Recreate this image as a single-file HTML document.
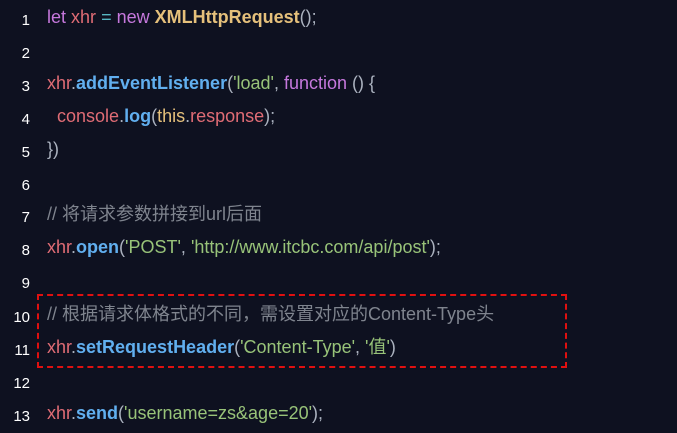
<!DOCTYPE html>
<html><head><style>
body{margin:0;width:677px;height:433px;background:#0e1120;overflow:hidden;font-family:"Liberation Sans","Noto Sans CJK SC",sans-serif;font-size:18px;}
.l{position:absolute;left:0;height:33px;line-height:33px;white-space:pre;color:#abb2bf}
.n{display:inline-block;width:30px;text-align:right;color:#fff;font-size:15px;margin-right:17px;position:relative;top:2px}
.z{font-size:18px}
.k{color:#c678dd}.v{color:#e06c75}.c{color:#e5c07b;font-weight:bold}.f{color:#61afef;font-weight:bold}.s{color:#98c379}.o{color:#56b6c2}.y{color:#e5c07b}.m{color:#7f848e}
.box{position:absolute;left:37px;top:294px;width:526px;height:70px;border:2px dashed #e01010}
</style></head><body>
<div class="l" style="top:1px"><span class="n">1</span><span class="k">let</span> <span class="v">xhr</span> <span class="o">=</span> <span class="k">new</span> <span class="c">XMLHttpRequest</span>();</div>
<div class="l" style="top:34px"><span class="n">2</span></div>
<div class="l" style="top:67px"><span class="n">3</span><span class="v">xhr</span>.<span class="f">addEventListener</span>(<span class="s">'load'</span>, <span class="k">function</span> () {</div>
<div class="l" style="top:100px"><span class="n">4</span>  <span class="v">console</span>.<span class="f">log</span>(<span class="y">this</span>.<span class="v">response</span>);</div>
<div class="l" style="top:133px"><span class="n">5</span>})</div>
<div class="l" style="top:166px"><span class="n">6</span></div>
<div class="l" style="top:198px"><span class="n">7</span><span class="m">// <span class="z">将请求参数拼接到</span>url<span class="z">后面</span></span></div>
<div class="l" style="top:231px"><span class="n">8</span><span class="v">xhr</span>.<span class="f">open</span>(<span class="s">'POST'</span>, <span class="s">'http://www.itcbc.com/api/post'</span>);</div>
<div class="l" style="top:264px"><span class="n">9</span></div>
<div class="l" style="top:298px"><span class="n">10</span><span class="m">// <span class="z">根据请求体格式的不同，需设置对应的</span>Content-Type<span class="z">头</span></span></div>
<div class="l" style="top:331px"><span class="n">11</span><span class="v">xhr</span>.<span class="f">setRequestHeader</span>(<span class="s">'Content-Type'</span>, <span class="s">'<span class="z">值</span>'</span>)</div>
<div class="l" style="top:364px"><span class="n">12</span></div>
<div class="l" style="top:397px"><span class="n">13</span><span class="v">xhr</span>.<span class="f">send</span>(<span class="s">'username=zs&amp;age=20'</span>);</div>
<div class="box"></div>
</body></html>
